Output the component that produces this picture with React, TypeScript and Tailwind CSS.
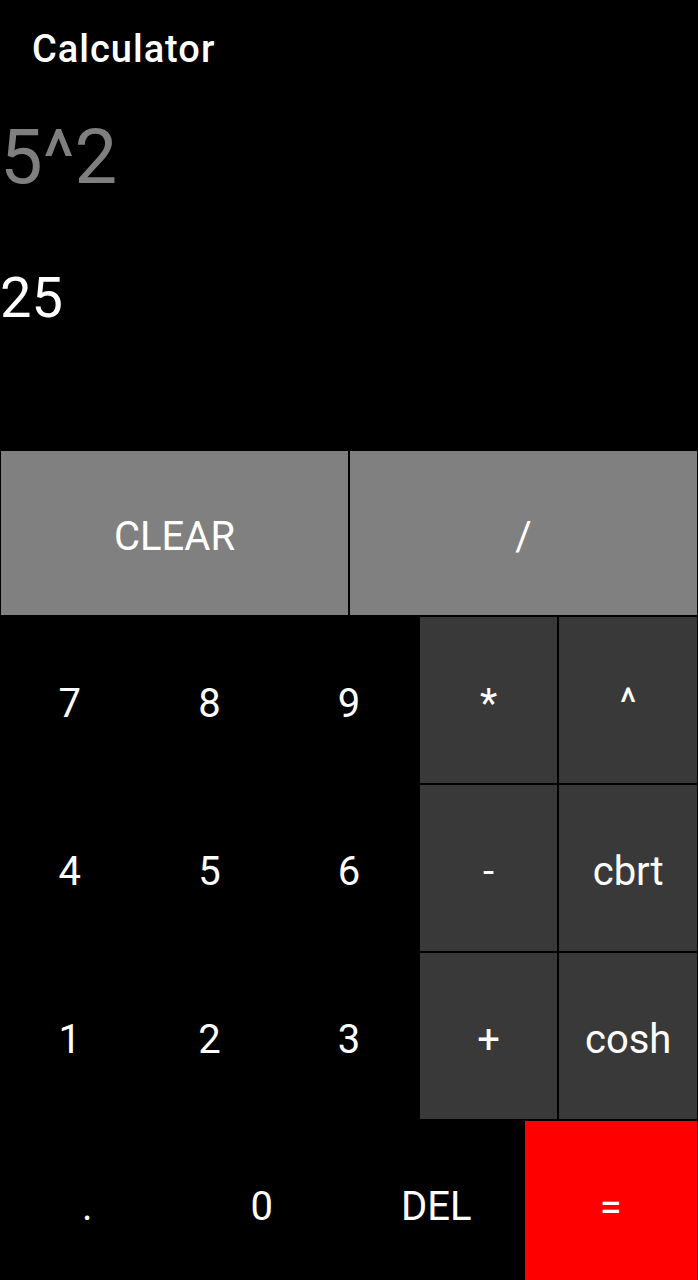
import React from 'react';

const digitRows = [
  ['7', '8', '9', '*', '^'],
  ['4', '5', '6', '-', 'cbrt'],
  ['1', '2', '3', '+', 'cosh'],
];

export default function App() {
  return (
    <div className="w-[698px] h-[1280px] bg-black overflow-hidden flex flex-col font-['Roboto',sans-serif] text-white">
      {/* Display */}
      <div className="h-[450px] flex flex-col">
        <div className="pt-[30px] pl-[32px] text-[38px] leading-none font-medium tracking-[1px]">Calculator</div>
        <div className="mt-[51px] text-[76px] leading-none text-[#7f7f7f]">5^2</div>
        <div className="mt-[75px] text-[56px] leading-none">25</div>
      </div>

      {/* Top row */}
      <div className="h-[166px] grid grid-cols-2">
        <button className="m-px pt-[8px] bg-[#808080] text-[40px] text-white flex items-center justify-center">CLEAR</button>
        <button className="m-px pt-[8px] bg-[#808080] text-[40px] text-white flex items-center justify-center">/</button>
      </div>

      {/* Digits and operators */}
      {digitRows.map((row, i) => (
        <div key={i} className="h-[168px] grid grid-cols-5">
          {row.map((k, j) => (
            <button
              key={k}
              className={`m-px pt-[8px] text-[40px] text-white flex items-center justify-center ${j > 2 ? 'bg-[#393939]' : 'bg-black'}`}
            >
              {k}
            </button>
          ))}
        </div>
      ))}

      {/* Bottom row */}
      <div className="h-[160px] grid grid-cols-4">
        <button className="m-px pt-[14px] bg-black text-[40px] text-white flex items-center justify-center">.</button>
        <button className="m-px pt-[14px] bg-black text-[40px] text-white flex items-center justify-center">0</button>
        <button className="m-px pt-[14px] bg-black text-[40px] text-white flex items-center justify-center">DEL</button>
        <button className="ml-px mt-px mr-px pt-[14px] bg-[#ff0000] text-[40px] text-white flex items-center justify-center">=</button>
      </div>
    </div>
  );
}
